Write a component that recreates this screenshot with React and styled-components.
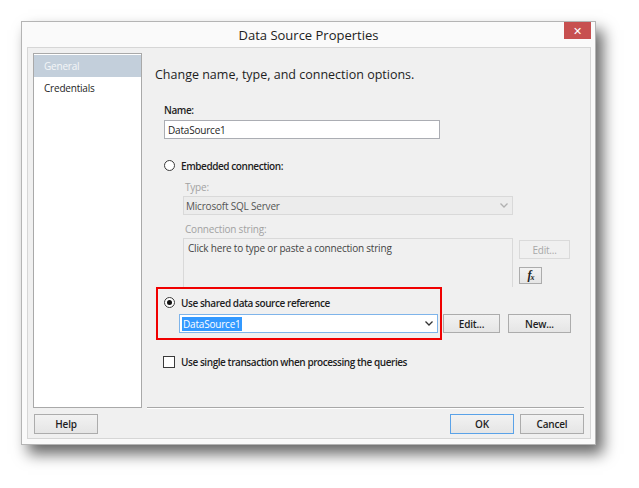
import React from 'react';
import styled, { createGlobalStyle } from 'styled-components';

const GlobalStyle = createGlobalStyle`
  html, body {
    margin: 0;
    padding: 0;
    background: #ffffff;
  }
  body {
    font-family: "Open Sans", "Noto Sans", sans-serif;
    font-size: 10px;
    letter-spacing: -0.2px;
    color: #1e1e1e;
  }
`;

const Page = styled.div`
  width: 639px;
  height: 488px;
  padding: 21px 0 0 21px;
  box-sizing: border-box;
`;

const Window = styled.div`
  width: 575px;
  height: 424px;
  box-sizing: border-box;
  border: 1px solid #b4b4b4;
  background: #fafafa;
  box-shadow: 7px 9px 14px rgba(0, 0, 0, 0.6);
  display: flex;
  flex-direction: column;
`;

const TitleBar = styled.div`
  position: relative;
  height: 25px;
  display: flex;
  align-items: center;
  justify-content: center;
  font-size: 13px;
  letter-spacing: 0;
  color: #222;
`;

const CloseButton = styled.div`
  position: absolute;
  top: 0;
  right: 4px;
  width: 27px;
  height: 17px;
  background: #c75050;
  color: #fff;
  display: flex;
  align-items: center;
  justify-content: center;
  font-size: 11px;
`;

const Frame = styled.div`
  flex: 1;
  margin: 0 4px 5px 5px;
  border: 1px solid #d6d6d6;
  background: #f0f0f0;
  padding: 5px 6px 0 5px;
  display: flex;
  flex-direction: column;
`;

const Body = styled.div`
  display: flex;
  height: 355px;
  gap: 5px;
`;

const PageList = styled.div`
  width: 109px;
  box-sizing: border-box;
  border: 1px solid #a9a9a9;
  background: #fff;
  padding-top: 1px;
`;

const PageItem = styled.div`
  height: 22px;
  display: flex;
  align-items: center;
  padding-left: 10px;
  background: ${(p) => (p.$active ? '#c3cfdb' : 'transparent')};
  color: ${(p) => (p.$active ? '#f4f6f8' : '#1e1e1e')};
`;

const Panel = styled.div`
  flex: 1;
  border-bottom: 1px solid #a8a8a8;
  box-shadow: 0 1px 0 #fff;
  display: flex;
  flex-direction: column;
`;

const Heading = styled.div`
  margin: 12px 0 0 8px;
  height: 20px;
  line-height: 20px;
  font-size: 12.5px;
  letter-spacing: 0;
  color: #1e1e1e;
`;

const Indent = styled.div`
  margin-left: ${(p) => p.$left || 17}px;
  margin-top: ${(p) => p.$top || 0}px;
`;

const Label = styled.div`
  height: 15px;
  line-height: 15px;
  color: ${(p) => (p.$disabled ? '#a2a2a2' : '#1e1e1e')};
  font-weight: ${(p) => (p.$disabled ? 400 : 600)};
  letter-spacing: ${(p) => (p.$disabled ? -0.2 : -0.4)}px;
  padding-left: ${(p) => (p.$disabled ? 2 : 0)}px;
`;

const TextInput = styled.div`
  margin-top: 2px;
  width: 276px;
  height: 19px;
  box-sizing: border-box;
  border: 1px solid #abadb3;
  background: #fff;
  padding-left: 3px;
  display: flex;
  align-items: center;
`;

const OptionRow = styled.div`
  display: flex;
  align-items: center;
  height: 13px;
  gap: 6px;
  font-weight: 600;
  letter-spacing: -0.43px;
`;

const Radio = styled.span`
  width: 11px;
  height: 11px;
  box-sizing: border-box;
  border-radius: 50%;
  border: 1px solid #3a3a3a;
  background: #fff;
  display: flex;
  align-items: center;
  justify-content: center;
  &::after {
    content: '';
    width: 5px;
    height: 5px;
    border-radius: 50%;
    background: ${(p) => (p.$checked ? '#111' : 'transparent')};
  }
`;

const Checkbox = styled.span`
  width: 12px;
  height: 12px;
  box-sizing: border-box;
  border: 1px solid #3a3a3a;
  background: #fff;
  margin-left: -1px;
`;

const Select = styled.div`
  width: ${(p) => p.$width}px;
  height: 19px;
  box-sizing: border-box;
  border: 1px solid ${(p) => (p.$disabled ? '#d9d9d9' : '#7eb4ea')};
  background: ${(p) => (p.$disabled ? '#ececec' : '#fff')};
  color: ${(p) => (p.$disabled ? '#555' : '#1e1e1e')};
  display: flex;
  align-items: center;
  justify-content: space-between;
  padding: 0 4px 0 2px;
  margin-top: ${(p) => (p.$disabled ? 1 : 5)}px;
  margin-left: ${(p) => (p.$disabled ? 0 : 15)}px;
`;

const Selected = styled.span`
  background: #3399ff;
  color: #fff;
  padding: 0 1px;
  line-height: 14px;
`;

const Chevron = styled.svg`
  width: 8px;
  height: 5px;
`;

const ConnRow = styled.div`
  display: flex;
  gap: 6px;
  margin-top: 1px;
`;

const ConnBox = styled.div`
  width: 330px;
  height: 49px;
  box-sizing: border-box;
  border: 1px solid #d9d9d9;
  border-bottom: none;
  padding: 2px 4px;
  color: #444;
`;

const SideButtons = styled.div`
  display: flex;
  flex-direction: column;
  gap: 8px;
  padding-top: 2px;
`;

const Button = styled.div`
  width: ${(p) => p.$width || 64}px;
  height: ${(p) => p.$height || 20}px;
  box-sizing: border-box;
  border: 1px solid ${(p) => (p.$primary ? '#5aa2e8' : p.$disabled ? '#dadada' : '#acacac')};
  background: ${(p) => (p.$disabled ? '#f0f0f0' : 'linear-gradient(#f2f2f2, #e5e5e5)')};
  color: ${(p) => (p.$disabled ? '#a8a8a8' : '#1e1e1e')};
  font-weight: ${(p) => (p.$disabled ? 400 : 600)};
  display: flex;
  align-items: center;
  justify-content: center;
`;

const Fx = styled.span`
  font-family: "Liberation Serif", serif;
  font-style: italic;
  font-weight: 700;
  font-size: 12px;
  color: #222;
  letter-spacing: -1px;
  sub {
    font-size: 8px;
    vertical-align: -1px;
  }
`;

const SharedRow = styled.div`
  display: flex;
  align-items: flex-start;
  margin-left: 9px;
  margin-top: 0;
`;

const Highlight = styled.div`
  width: 286px;
  height: 53px;
  box-sizing: border-box;
  border: 2px solid #f00000;
  padding: 7px 3px 0 6px;
`;

const SharedButtons = styled.div`
  display: flex;
  gap: 8px;
  margin-top: 27px;
  margin-left: 1px;
`;

const Footer = styled.div`
  display: flex;
  align-items: center;
  padding-top: 6px;
  padding-left: 1px;
  gap: 6px;
`;

const Spacer = styled.div`
  flex: 1;
`;

const ChevronIcon = ({ color }) => (
  <Chevron viewBox="0 0 8 5">
    <path d="M0.5 0.5 L4 4 L7.5 0.5" fill="none" stroke={color} strokeWidth="1.3" />
  </Chevron>
);

export default function App() {
  return (
    <Page>
      <GlobalStyle />
      <Window>
        <TitleBar>
          Data Source Properties
          <CloseButton>✕</CloseButton>
        </TitleBar>
        <Frame>
          <Body>
            <PageList>
              <PageItem $active>General</PageItem>
              <PageItem>Credentials</PageItem>
            </PageList>
            <Panel>
              <Heading>Change name, type, and connection options.</Heading>

              <Indent $top={18}>
                <Label>Name:</Label>
                <TextInput>DataSource1</TextInput>
              </Indent>

              <Indent $top={20}>
                <OptionRow>
                  <Radio />
                  Embedded connection:
                </OptionRow>
              </Indent>

              <Indent $left={36} $top={8}>
                <Label $disabled>Type:</Label>
                <Select $width={330} $disabled>
                  Microsoft SQL Server
                  <ChevronIcon color="#b0b0b0" />
                </Select>
                <Indent $left={0.01} $top={7}>
                  <Label $disabled>Connection string:</Label>
                </Indent>
                <ConnRow>
                  <ConnBox>Click here to type or paste a connection string</ConnBox>
                  <SideButtons>
                    <Button $disabled $width={51} $height={19}>Edit...</Button>
                    <Button $width={23} $height={17}>
                      <Fx>f<sub>x</sub></Fx>
                    </Button>
                  </SideButtons>
                </ConnRow>
              </Indent>

              <SharedRow>
                <Highlight>
                  <OptionRow>
                    <Radio $checked />
                    Use shared data source reference
                  </OptionRow>
                  <Select $width={259}>
                    <Selected>DataSource1</Selected>
                    <ChevronIcon color="#333" />
                  </Select>
                </Highlight>
                <SharedButtons>
                  <Button $width={57} $height={19}>Edit...</Button>
                  <Button $width={63} $height={19}>New...</Button>
                </SharedButtons>
              </SharedRow>

              <Indent $top={15}>
                <OptionRow>
                  <Checkbox />
                  Use single transaction when processing the queries
                </OptionRow>
              </Indent>
            </Panel>
          </Body>
          <Footer>
            <Button>Help</Button>
            <Spacer />
            <Button $primary>OK</Button>
            <Button>Cancel</Button>
          </Footer>
        </Frame>
      </Window>
    </Page>
  );
}
